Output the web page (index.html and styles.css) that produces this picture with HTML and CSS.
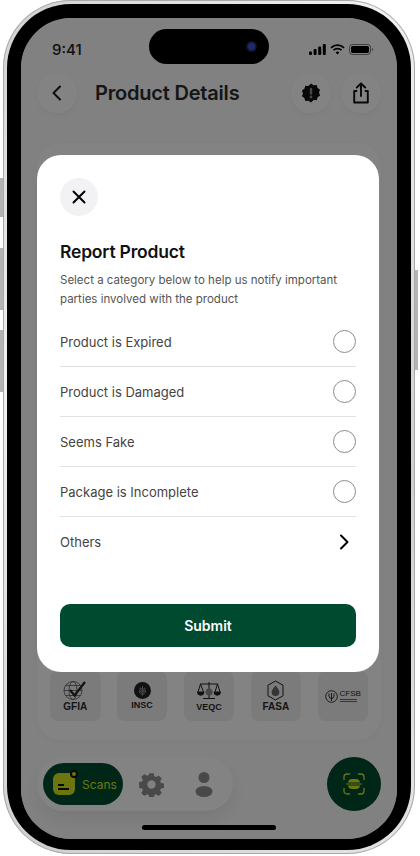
FILE: index.html
```html
<!DOCTYPE html>
<html lang="en">
<head>
    <meta charset="UTF-8">
    <meta name="viewport" content="width=device-width, initial-scale=1.0">
    <title>Report Product</title>
    <link rel="stylesheet" href="styles.css">
</head>
<body>
    <div class="phone">
        <span class="side-btn side-mute"></span>
        <span class="side-btn side-up"></span>
        <span class="side-btn side-down"></span>
        <span class="side-btn side-power"></span>
        <div class="bezel">
            <div class="screen">
                <div class="status-bar">
                    <span class="time">9:41</span>
                    <div class="status-icons">
                        <svg width="17" height="11" viewBox="0 0 17 11"><rect x="0" y="7.5" width="3" height="3.5" rx="1"/><rect x="4.6" y="5" width="3" height="6" rx="1"/><rect x="9.2" y="2.5" width="3" height="8.5" rx="1"/><rect x="13.8" y="0" width="3" height="11" rx="1"/></svg>
                        <svg width="15" height="11" viewBox="0 0 15 11" fill="none" stroke="#000" stroke-width="1.7"><path d="M1 3.8a9.2 9.2 0 0 1 13 0"/><path d="M3.5 6.2a5.7 5.7 0 0 1 8 0"/><path d="M7.5 10.6 5.6 8.5a2.7 2.7 0 0 1 3.8 0z" fill="#000" stroke="none"/></svg>
                        <svg width="24" height="11" viewBox="0 0 24 11"><rect x=".5" y=".5" width="21" height="10" rx="3" fill="none" stroke="#000" opacity=".5"/><rect x="2" y="2" width="18" height="7" rx="1.8"/><path d="M23 3.8c.6.3 1 1 1 1.7s-.4 1.4-1 1.7z" opacity=".5"/></svg>
                    </div>
                </div>

                <div class="top-bar">
                    <button class="round-btn">
                        <svg width="22" height="22" viewBox="0 0 22 22" fill="none" stroke="#1c1c1c" stroke-width="2" stroke-linecap="round" stroke-linejoin="round"><path d="M14 4.5 7.5 11l6.500 6.500"/></svg>
                    </button>
                    <h1 class="page-title">Product Details</h1>
                    <button class="round-btn">
                        <svg width="22" height="22" viewBox="0 0 22 22"><path d="M11 1.500l2.600 1.700 3.100-.3.9 3 2.500 1.800-1.100 2.900 1.100 2.900-2.500 1.800-.9 3-3.100-.3L11 20.500l-2.600-1.700-3.100.3-.9-3-2.500-1.800 1.100-2.900-1.100-2.900 2.500-1.800.9-3 3.100.3z" fill="#111"/><rect x="9.800" y="5.800" width="2.400" height="6.800" rx="1.200" fill="#8a8a8a"/><circle cx="11" cy="15" r="1.400" fill="#8a8a8a"/></svg>
                    </button>
                    <button class="round-btn">
                        <svg width="22" height="24" viewBox="0 0 22 24" fill="none" stroke="#111" stroke-width="1.900" stroke-linecap="round" stroke-linejoin="round"><path d="M11 15V2.500M6.800 6.500 11 2.300l4.200 4.200"/><path d="M6.500 10H4.200v11.500h13.600V10h-2.300"/></svg>
                    </button>
                </div>

                <div class="details-card">
                    <div class="cert-row">
                        <div class="cert">
                            <svg width="26" height="21" viewBox="0 0 26 21" fill="none" stroke="#555" stroke-width=".8"><circle cx="11" cy="10.500" r="9"/><ellipse cx="11" cy="10.500" rx="4" ry="9"/><path d="M2 10.500h18M3.500 5.500h15M3.500 15.500h15"/><path d="M8 10l4.500 5.500L23 2" stroke="#222" stroke-width="2.200"/></svg>
                            <span class="cert-name cert-lg">GFIA</span>
                        </div>
                        <div class="cert">
                            <svg width="17" height="17" viewBox="0 0 17 17"><circle cx="8.500" cy="8.500" r="8.500" fill="#222"/><path d="M8.500 4v9.500M8.500 13 5.500 10.500V8.500l3 2.500 3-2.500v2zM8.500 9.500 6 7.500V5.800l2.500 2 2.500-2v1.700z" fill="none" stroke="#8a8a8a" stroke-width="1"/></svg>
                            <span class="cert-name">INSC</span>
                        </div>
                        <div class="cert">
                            <svg width="24" height="20" viewBox="0 0 24 20" fill="none" stroke="#222" stroke-width="1"><path d="M12 1v16M6 17.500h12M3 3h18M3.500 3 1 11M3.500 3 6.500 11M20.500 3 18 11M20.500 3 23 11"/><path d="M.5 11h6.500a3.200 3.200 0 0 1-6.500 0zM17 11h6.500a3.200 3.200 0 0 1-6.500 0z" fill="#222"/><circle cx="12" cy="11" r="3.500" fill="#888" stroke="none"/></svg>
                            <span class="cert-name">VEQC</span>
                        </div>
                        <div class="cert">
                            <svg width="17" height="21" viewBox="0 0 17 21" fill="none" stroke="#222" stroke-width="1"><path d="M8.500 1 16 5.200v10.600L8.500 20 1 15.800V5.200z"/><path d="M8.500 5.500c2.500 3 3.800 4.800 3.800 6.700a3.800 3.800 0 0 1-7.600 0c0-1.900 1.300-3.700 3.800-6.700z" fill="#666" stroke="none"/></svg>
                            <span class="cert-name cert-lg">FASA</span>
                        </div>
                        <div class="cert cert-inline">
                            <svg width="13" height="13" viewBox="0 0 13 13" fill="none" stroke="#222" stroke-width=".9"><circle cx="6.500" cy="6.500" r="5.800"/><path d="M6.500 3v8M4 3.500v2.500a2.500 2.500 0 0 0 5 0V3.500"/></svg>
                            <div class="cfsb">
                                <span class="cfsb-name">CFSB</span>
                                <span class="cfsb-line"></span>
                                <span class="cfsb-line"></span>
                            </div>
                        </div>
                    </div>
                </div>

                <div class="bottom-row">
                    <div class="tab-bar">
                        <div class="tab-active">
                            <span class="scan-icon"><i class="scan-line-a"></i><i class="scan-line-b"></i><b class="scan-dot"></b></span>
                            <span class="tab-label">Scans</span>
                        </div>
                        <svg class="tab-gear" width="25" height="25" viewBox="0 0 24 24"><path d="M9.800.8h4.400l.6 3 1.800.8 2.600-1.700 3.100 3.100-1.700 2.600.8 1.800 3 .6v4.400l-3 .6-.8 1.800 1.700 2.600-3.100 3.100-2.600-1.700-1.800.8-.6 3H9.800l-.6-3-1.800-.8-2.600 1.700-3.100-3.100 1.700-2.600-.8-1.800-3-.6V9.600l3-.6.8-1.800-1.700-2.600 3.100-3.100 2.600 1.700 1.800-.8z" fill="#8c8c8c" transform="translate(.5 .5) scale(.96)"/><circle cx="12" cy="12" r="4" fill="#f6f6f6"/></svg>
                        <svg class="tab-person" width="18" height="25" viewBox="0 0 18 25"><circle cx="9" cy="5.500" r="5.500" fill="#8c8c8c"/><ellipse cx="9" cy="19.500" rx="8.500" ry="5.500" fill="#8c8c8c"/></svg>
                    </div>
                    <button class="scan-fab">
                        <svg width="22" height="22" viewBox="0 0 22 22" fill="none" stroke="#cfe01c" stroke-width="1.300" stroke-linecap="round"><path d="M1 6.500V4a3 3 0 0 1 3-3h2.500M15.500 1H18a3 3 0 0 1 3 3v2.500M21 15.500V18a3 3 0 0 1-3 3h-2.500M6.500 21H4a3 3 0 0 1-3-3v-2.500"/><path d="M5 9.500a4 4 0 0 1 4-3.500h4a4 4 0 0 1 4 3.500zM5 12.500h12a4 4 0 0 1-4 3.500H9a4 4 0 0 1-4-3.500z" fill="#cfe01c" stroke="none"/><path d="M3.500 11h15" stroke-width="1"/></svg>
                    </button>
                </div>

                <div class="home-bar"></div>

                <div class="scrim"></div>
                <div class="island"><span class="lens"></span></div>

                <div class="modal">
                    <button class="close-btn">
                        <svg width="16" height="16" viewBox="0 0 16 16" fill="none" stroke="#000" stroke-width="2" stroke-linecap="round"><path d="M2.500 2.500l11 11M13.500 2.500l-11 11"/></svg>
                    </button>
                    <h2 class="modal-title">Report Product</h2>
                    <p class="modal-desc">Select a category below to help us notify important parties involved with the product</p>
                    <ul class="option-list">
                        <li class="option"><span>Product is Expired</span><span class="radio"></span></li>
                        <li class="option"><span>Product is Damaged</span><span class="radio"></span></li>
                        <li class="option"><span>Seems Fake</span><span class="radio"></span></li>
                        <li class="option"><span>Package is Incomplete</span><span class="radio"></span></li>
                        <li class="option">
                            <span>Others</span>
                            <svg class="chevron" width="12" height="16" viewBox="0 0 12 16" fill="none" stroke="#000" stroke-width="2" stroke-linecap="round" stroke-linejoin="round"><path d="M3 1.500 9.500 8 3 14.500"/></svg>
                        </li>
                    </ul>
                    <button class="submit-btn">Submit</button>
                </div>
            </div>
        </div>
    </div>
</body>
</html>
```

FILE: styles.css
```css
* {
    box-sizing: border-box;
}
html, body {
    margin: 0;
    height: 100%;
    background-color: #fff;
    overflow: hidden;
}
body {
    font-family: 'Inter', 'Liberation Sans', sans-serif;
    color: #333;
}
button {
    border: none;
    padding: 0;
    font-family: inherit;
    cursor: pointer;
}

/* phone frame */
.phone {
    position: relative;
    width: 412px;
    height: 854px;
    margin-left: 3px;
    padding: 4px;
    border-radius: 68px;
    background: linear-gradient(135deg, #d0d0d0, #f2f2f2 30%, #cfcfcf 70%, #e6e6e6);
    box-shadow: inset 0 0 0 1px #a9a9a9;
}
.bezel {
    height: 100%;
    padding: 14px 14px 11px;
    border-radius: 64px;
    background-color: #000;
}
.side-btn {
    position: absolute;
    width: 3px;
    background-color: #b4b4b4;
}
.side-mute {
    left: -3px;
    top: 178px;
    height: 39px;
}
.side-up {
    left: -3px;
    top: 248px;
    height: 62px;
}
.side-down {
    left: -3px;
    top: 330px;
    height: 62px;
}
.side-power {
    right: -3px;
    top: 270px;
    height: 100px;
}

/* screen under the dialog */
.screen {
    position: relative;
    display: flex;
    flex-direction: column;
    height: 100%;
    padding: 0 16px;
    border-radius: 50px;
    overflow: hidden;
    background-color: #f8f8f8;
}
.status-bar {
    display: flex;
    justify-content: space-between;
    align-items: center;
    height: 22px;
    margin: 20px 8px 0 15px;
}
.time {
    font-size: 15px;
    font-weight: 500;
    color: #222;
}
.status-icons {
    display: flex;
    align-items: center;
    gap: 4px;
}
.top-bar {
    display: flex;
    align-items: center;
    gap: 10px;
    margin-top: 13px;
}
.round-btn {
    display: flex;
    align-items: center;
    justify-content: center;
    flex: none;
    width: 40px;
    height: 40px;
    border-radius: 50%;
    background-color: #fcfcfc;
    box-shadow: 0 2px 6px rgba(0, 0, 0, 0.05);
}
.page-title {
    flex: 1;
    margin: 0 0 0 8px;
    font-size: 20px;
    font-weight: 600;
    letter-spacing: -0.2px;
    color: #2b2b2b;
}
.details-card {
    display: flex;
    flex-direction: column;
    justify-content: flex-end;
    height: 597px;
    margin-top: 30px;
    padding: 0 13px 19px;
    border-radius: 24px;
    background-color: #fcfcfc;
    box-shadow: 0 2px 8px rgba(0, 0, 0, 0.04);
}
.cert-row {
    display: flex;
    justify-content: space-between;
}
.cert {
    display: flex;
    flex-direction: column;
    align-items: center;
    justify-content: center;
    width: 50.5px;
    height: 50px;
    border-radius: 8px;
    background-color: #ececec;
}
.cert-inline {
    flex-direction: row;
    gap: 2px;
}
.cert-name {
    margin-top: 1px;
    font-family: 'Liberation Sans', sans-serif;
    font-size: 9px;
    font-weight: 700;
    line-height: 10px;
    color: #2a2a2a;
}
.cert-lg {
    font-size: 10px;
}
.cfsb {
    display: flex;
    flex-direction: column;
    gap: 1px;
}
.cfsb-name {
    font-family: 'Liberation Sans', sans-serif;
    font-size: 8px;
    line-height: 8px;
    color: #2a2a2a;
}
.cfsb-line {
    width: 17px;
    height: 1px;
    background-color: #666;
}
.bottom-row {
    display: flex;
    justify-content: space-between;
    align-items: center;
    margin-top: 17px;
}
.tab-bar {
    display: flex;
    align-items: center;
    width: 196px;
    height: 54px;
    padding: 0 6px;
    border-radius: 27px;
    background-color: #fcfcfc;
    box-shadow: 0 8px 18px rgba(0, 0, 0, 0.08);
}
.tab-active {
    display: flex;
    align-items: center;
    gap: 7px;
    width: 80px;
    height: 42px;
    padding-left: 10px;
    border-radius: 21px;
    background-color: #004a2f;
}
.scan-icon {
    position: relative;
    display: block;
    width: 22px;
    height: 22px;
    border-radius: 6px;
    background-color: #cfe01c;
}
.scan-line-a, .scan-line-b {
    position: absolute;
    left: 5px;
    height: 2px;
    background-color: #111;
}
.scan-line-a {
    top: 11px;
    width: 6px;
}
.scan-line-b {
    top: 15px;
    width: 11px;
}
.scan-dot {
    position: absolute;
    top: -3px;
    right: -3px;
    width: 8px;
    height: 8px;
    border: 2px solid #111;
    border-radius: 50%;
    background-color: #cfe01c;
}
.tab-label {
    font-size: 12px;
    color: #cfe01c;
}
.tab-gear {
    margin-left: 16px;
}
.tab-person {
    margin-left: 31px;
}
.scan-fab {
    display: flex;
    align-items: center;
    justify-content: center;
    width: 54px;
    height: 54px;
    border-radius: 50%;
    background-color: #004a2f;
}
.home-bar {
    align-self: center;
    width: 134px;
    height: 5px;
    margin-top: 14px;
    border-radius: 3px;
    background-color: #000;
}

/* overlay */
.scrim {
    position: absolute;
    top: 0;
    right: 0;
    bottom: 0;
    left: 0;
    background-color: rgba(0, 0, 0, 0.48);
}
.island {
    position: absolute;
    top: 11px;
    left: 128px;
    width: 120px;
    height: 35px;
    border-radius: 18px;
    background-color: #000;
}
.lens {
    position: absolute;
    top: 12px;
    right: 12px;
    width: 11px;
    height: 11px;
    border-radius: 50%;
    background: radial-gradient(circle, #1d2a6b 35%, #0b0b1c 70%);
}
.modal {
    position: absolute;
    top: 137px;
    left: 16px;
    width: 342px;
    height: 517px;
    padding: 23px;
    border-radius: 24px;
    background-color: #fff;
}
.close-btn {
    display: flex;
    align-items: center;
    justify-content: center;
    width: 38px;
    height: 38px;
    border-radius: 50%;
    background-color: #f2f2f4;
}
.modal-title {
    margin: 24px 0 0;
    font-size: 17.500px;
    font-weight: 600;
    line-height: 24px;
    letter-spacing: -0.2px;
    color: #111;
}
.modal-desc {
    margin: 7px 0 0;
    font-size: 11.500px;
    line-height: 19px;
    color: #555;
}
.option-list {
    margin: 8px 0 0;
    padding: 0;
    list-style: none;
}
.option {
    display: flex;
    align-items: center;
    justify-content: space-between;
    height: 50px;
    border-bottom: 1px solid #e2e2e2;
    font-size: 13px;
    color: #444;
}
.option:last-child {
    border-bottom: none;
}
.radio {
    width: 23px;
    height: 23px;
    border: 1px solid #8c8c8c;
    border-radius: 50%;
}
.chevron {
    margin-right: 6px;
}
.submit-btn {
    display: block;
    width: 100%;
    height: 43px;
    margin-top: 37px;
    border-radius: 10px;
    background-color: #004a2f;
    font-size: 14px;
    font-weight: 600;
    color: #fff;
}
```
